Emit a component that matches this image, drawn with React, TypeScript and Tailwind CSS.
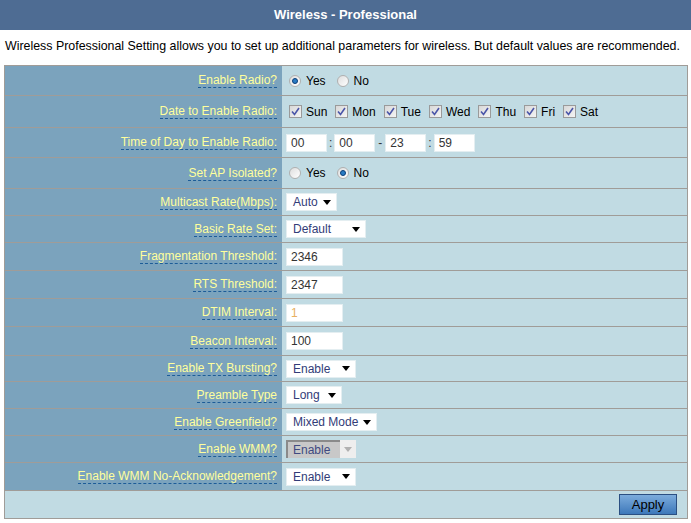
import React from "react";

const font = { fontFamily: '"Liberation Sans", Arial, sans-serif' };

const Label = ({ text }: { text: string }) => (
  <div className="w-[277px] shrink-0 h-full flex items-center justify-end pr-[5px] bg-[#7ba3bd]">
    <span className="text-[#ffff9c] text-[12px] leading-[14px] border-b border-dashed border-[#1c5c98]">
      {text}
    </span>
  </div>
);

const Row = ({ label, h, children }: { label: string; h: string; children: React.ReactNode }) => (
  <div className={`flex border-b border-[#a09c98] ${h}`}>
    <Label text={label} />
    <div className="flex-1 flex items-center pl-[4px] text-[12px] text-black">{children}</div>
  </div>
);

const Radio = ({ checked, label }: { checked?: boolean; label: string }) => (
  <span className="flex items-center mr-[8px]">
    <span className="w-[12px] h-[12px] rounded-full border border-[#b0b0b0] bg-gradient-to-br from-[#dedede] to-[#ffffff] flex items-center justify-center mx-[3px]">
      {checked && <span className="w-[6px] h-[6px] rounded-full bg-[#2a7cc4] border border-[#0b3f7a]" />}
    </span>
    <span className="ml-[2px]">{label}</span>
  </span>
);

const Check = ({ label }: { label: string }) => (
  <span className="flex items-center mr-[5px]">
    <span className="w-[13px] h-[13px] border border-[#9a9a9a] bg-gradient-to-br from-[#d8d8d8] to-[#f4f4f4] flex items-center justify-center mx-[3px]">
      <svg width="9" height="9" viewBox="0 0 9 9">
        <path d="M1 4.5 L3.5 7.5 L8 1" fill="none" stroke="#4a55a8" strokeWidth="1.6" />
      </svg>
    </span>
    <span className="ml-[1px]">{label}</span>
  </span>
);

const Input = ({ value, w, color = "text-[#333]" }: { value: string; w: string; color?: string }) => (
  <div className={`${w} h-[18px] bg-white border border-[#e4eef1] flex items-center pl-[4px] text-[12px] ${color}`}>
    {value}
  </div>
);

const Select = ({ value, w }: { value: string; w: string }) => (
  <div className={`${w} h-[18px] bg-white border border-[#e4eef1] flex items-center justify-between pl-[6px] pr-[5px] text-[12px] text-[#323c78]`}>
    <span>{value}</span>
    <svg width="8" height="5" viewBox="0 0 8 5">
      <path d="M0 0 H8 L4 5 Z" fill="#000" />
    </svg>
  </div>
);

export default function App() {
  return (
    <div className="w-[691px] h-[523px] bg-white overflow-hidden" style={font}>
      <div className="h-[30px] bg-[#4e6c93] flex items-center justify-center text-white text-[13px] font-bold">
        Wireless - Professional
      </div>
      <div className="h-[35px] flex items-center pl-[5px] text-[12.4px] text-black pb-[3px]">
        Wireless Professional Setting allows you to set up additional parameters for wireless. But default values are recommended.
      </div>
      <div className="ml-[4px] w-[684px] border border-[#a09c98] bg-[#c1dbe3]">
        <Row label="Enable Radio?" h="h-[30px]">
          <Radio checked label="Yes" />
          <Radio label="No" />
        </Row>
        <Row label="Date to Enable Radio:" h="h-[32px]">
          <Check label="Sun" />
          <Check label="Mon" />
          <Check label="Tue" />
          <Check label="Wed" />
          <Check label="Thu" />
          <Check label="Fri" />
          <Check label="Sat" />
        </Row>
        <Row label="Time of Day to Enable Radio:" h="h-[30px]">
          <Input value="00" w="w-[41px]" />
          <span className="mx-[2px] text-[#333]">:</span>
          <Input value="00" w="w-[41px]" />
          <span className="mx-[3px] text-[#333]">-</span>
          <Input value="23" w="w-[41px]" />
          <span className="mx-[2px] text-[#333]">:</span>
          <Input value="59" w="w-[41px]" />
        </Row>
        <Row label="Set AP Isolated?" h="h-[31px]">
          <Radio label="Yes" />
          <Radio checked label="No" />
        </Row>
        <Row label="Multicast Rate(Mbps):" h="h-[27px]">
          <Select value="Auto" w="w-[51px]" />
        </Row>
        <Row label="Basic Rate Set:" h="h-[27px]">
          <Select value="Default" w="w-[80px]" />
        </Row>
        <Row label="Fragmentation Threshold:" h="h-[28px]">
          <Input value="2346" w="w-[57px]" />
        </Row>
        <Row label="RTS Threshold:" h="h-[28px]">
          <Input value="2347" w="w-[57px]" />
        </Row>
        <Row label="DTIM Interval:" h="h-[28px]">
          <Input value="1" w="w-[57px]" color="text-[#e8b060]" />
        </Row>
        <Row label="Beacon Interval:" h="h-[29px]">
          <Input value="100" w="w-[57px]" />
        </Row>
        <Row label="Enable TX Bursting?" h="h-[26px]">
          <Select value="Enable" w="w-[70px]" />
        </Row>
        <Row label="Preamble Type" h="h-[27px]">
          <Select value="Long" w="w-[56px]" />
        </Row>
        <Row label="Enable Greenfield?" h="h-[27px]">
          <Select value="Mixed Mode" w="w-[91px]" />
        </Row>
        <Row label="Enable WMM?" h="h-[27px]">
          <div className="w-[70px] h-[18px] flex bg-[#eeeeee] text-[12px]">
            <div className="flex-1 flex items-center pl-[5px] bg-[#c8c8c8] border-t-2 border-l-2 border-[#8a8a8a] text-[#3f4a80]">
              Enable
            </div>
            <div className="w-[16px] flex items-center justify-center">
              <svg width="8" height="5" viewBox="0 0 8 5">
                <path d="M0 0 H8 L4 5 Z" fill="#b0b0b0" />
              </svg>
            </div>
          </div>
        </Row>
        <Row label="Enable WMM No-Acknowledgement?" h="h-[28px]">
          <Select value="Enable" w="w-[70px]" />
        </Row>
        <div className="h-[27px] flex items-center justify-end pr-[10px]">
          <button className="w-[58px] h-[21px] bg-gradient-to-b from-[#7cacdc] to-[#3d78ba] border border-[#2b4f82] text-[13px] text-black">
            Apply
          </button>
        </div>
      </div>
    </div>
  );
}
